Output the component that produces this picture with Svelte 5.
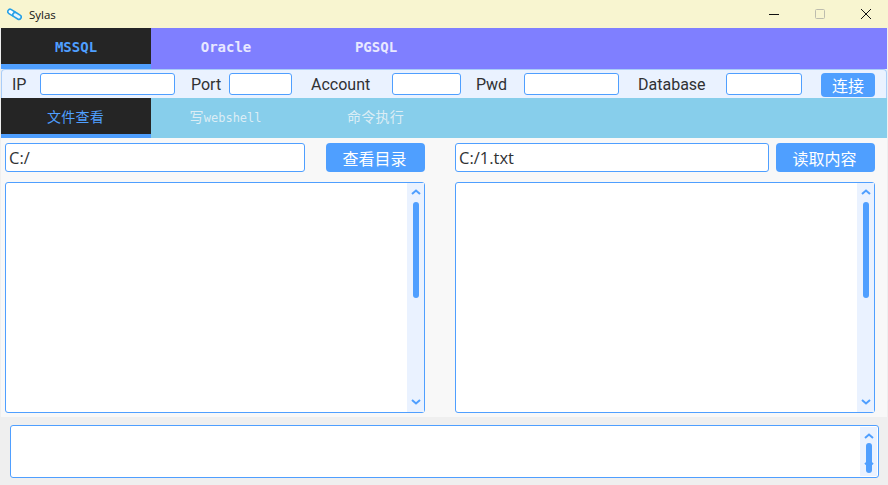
<script>
  const dbTabs = ['MSSQL', 'Oracle', 'PGSQL'];
  const toolTabs = [
    { zh: '文件查看', en: '' },
    { zh: '写', en: 'webshell' },
    { zh: '命令执行', en: '' },
  ];
  let dbTab = $state(0);
  let toolTab = $state(0);
</script>

{#snippet up()}
  <svg class="arrow" width="10" height="6" viewBox="0 0 10 6"><path d="M1 5L5 1.5L9 5" fill="none" stroke="#4f9fff" stroke-width="2"/></svg>
{/snippet}
{#snippet down()}
  <svg class="arrow down" width="10" height="6" viewBox="0 0 10 6"><path d="M1 1L5 4.5L9 1" fill="none" stroke="#4f9fff" stroke-width="2"/></svg>
{/snippet}

<div class="window">
  <header class="titlebar">
    <svg class="logo" width="15" height="13" viewBox="0 0 15 13" fill="none">
      <rect x="0.5" y="2.5" width="9" height="4.6" rx="2.3" transform="rotate(32 5 4.8)" fill="#fff" stroke="#27a0e6" stroke-width="1.6"/>
      <rect x="5.5" y="5.6" width="9" height="4.6" rx="2.3" transform="rotate(32 10 7.9)" fill="#e6f5fd" stroke="#27a0e6" stroke-width="1.6"/>
    </svg>
    <span class="title">Sylas</span>
    <div class="controls">
      <svg width="14" height="14" viewBox="0 0 14 14"><path d="M2 7.5H12" stroke="#111" stroke-width="1"/></svg>
      <svg width="14" height="14" viewBox="0 0 14 14"><rect x="2.5" y="2.5" width="9" height="9" rx="1" fill="none" stroke="#bdbcae"/></svg>
      <svg width="14" height="14" viewBox="0 0 14 14"><path d="M2 2L12 12M12 2L2 12" stroke="#111" stroke-width="1"/></svg>
    </div>
  </header>

  <nav class="tabs db">
    {#each dbTabs as tab, i}
      <button class="tab" class:active={dbTab === i} onclick={() => (dbTab = i)}>{tab}</button>
    {/each}
  </nav>

  <div class="conn">
    <label><span class="l-ip">IP</span><input class="w135" /></label>
    <label><span class="l-port">Port</span><input class="w63" /></label>
    <label><span class="l-account">Account</span><input class="w69" /></label>
    <label><span class="l-pwd">Pwd</span><input class="w95" /></label>
    <label><span class="l-database">Database</span><input class="w76" /></label>
    <button class="btn connect">连接</button>
  </div>

  <nav class="tabs tools">
    {#each toolTabs as tab, i}
      <button class="tab" class:active={toolTab === i} onclick={() => (toolTab = i)}>{tab.zh}<span class="en">{tab.en}</span></button>
    {/each}
  </nav>

  <main class="panes">
    <section class="pane left">
      <div class="bar">
        <input class="path" value="C:/" />
        <button class="btn">查看目录</button>
      </div>
      <div class="box">
        <div class="scroll">
          {@render up()}
          <div class="thumb"></div>
          {@render down()}
        </div>
      </div>
    </section>
    <section class="pane right">
      <div class="bar">
        <input class="path" value="C:/1.txt" />
        <button class="btn">读取内容</button>
      </div>
      <div class="box">
        <div class="scroll">
          {@render up()}
          <div class="thumb"></div>
          {@render down()}
        </div>
      </div>
    </section>
  </main>

  <footer class="log">
    <div class="box small">
      <div class="scroll">
        {@render up()}
        <div class="thumb"></div>
        {@render down()}
      </div>
    </div>
  </footer>
</div>

<style>
  :global(body) {
    background: #efefef;
  }
  .window {
    width: 888px;
    height: 485px;
    overflow: hidden;
    display: flex;
    flex-direction: column;
    font-family: "Open Sans", "Noto Sans CJK SC", sans-serif;
    color: #303133;
    background: #efefef;
    box-sizing: border-box;
    padding-right: 1px;
  }
  .titlebar {
    height: 28px;
    flex-shrink: 0;
    display: flex;
    align-items: center;
    background: #f8f5d0;
    margin-right: -1px;
    padding-left: 7px;
  }
  .logo {
    margin-right: 7px;
  }
  .title {
    font-size: 11.5px;
    color: #111;
  }
  .controls {
    margin-left: auto;
    display: flex;
    gap: 32px;
    padding-right: 15px;
  }
  .tabs {
    display: flex;
    margin-left: 1px;
    flex-shrink: 0;
  }
  .db {
    height: 41px;
    background: #7f7fff;
  }
  .tools {
    height: 40px;
    background: #87ceeb;
  }
  .tab {
    width: 150px;
    border: none;
    padding: 0;
    background: none;
    color: #e8e8ff;
    font-family: "DejaVu Sans Mono", "Noto Sans CJK SC", monospace;
    font-size: 14px;
    cursor: pointer;
  }
  .db .tab {
    font-weight: 700;
    padding: 2px 0 0;
    height: 41px;
    border-bottom: 5px solid transparent;
  }
  .db .tab.active {
    border-bottom-color: #4f9fff;
  }
  .tools .tab {
    color: #dcedf5;
    letter-spacing: 0.3px;
    padding: 0 1px 0 0;
    border-bottom: 4px solid transparent;
  }
  .tools .tab.active {
    border-bottom-color: #4f9fff;
  }
  .tools .en {
    font-size: 12px;
    letter-spacing: 0;
  }
  .tab.active {
    background: #252525;
    color: #4f9fff;
  }
  .conn {
    height: 29px;
    flex-shrink: 0;
    box-sizing: border-box;
    display: flex;
    align-items: flex-start;
    padding: 3px 0 0 10px;
    margin-left: 1px;
    background: #eaf2ff;
    border: 1px solid #a9cdf8;
    border-width: 1px 1px 0 1px;
    border-radius: 4px 4px 0 0;
  }
  .conn label {
    display: flex;
    align-items: center;
    font-family: Roboto, sans-serif;
    font-size: 16px;
    height: 22px;
  }
  .l-ip { width: 28px; }
  .l-port { width: 38px; margin-left: 16px; }
  .l-account { width: 81px; margin-left: 19px; }
  .l-pwd { width: 48px; margin-left: 15px; }
  .l-database { width: 88px; margin-left: 19px; }
  input {
    box-sizing: border-box;
    height: 22px;
    padding: 0 3px;
    border: 1px solid #4f9fff;
    border-radius: 3px;
    background: #fff;
    font-family: inherit;
    color: #303133;
    outline: none;
  }
  .w135 { width: 135px; }
  .w63 { width: 63px; }
  .w69 { width: 69px; }
  .w95 { width: 95px; }
  .w76 { width: 76px; }
  .btn {
    border: none;
    border-radius: 4px;
    background: #4f9fff;
    color: #fff;
    font-family: inherit;
    font-size: 16px;
    padding: 0 2px 0 0;
    cursor: pointer;
  }
  .connect {
    width: 54px;
    height: 24px;
    margin-left: 19px;
    padding: 0;
  }
  .panes {
    height: 279px;
    flex-shrink: 0;
    display: flex;
    gap: 30px;
    box-sizing: border-box;
    padding: 5px 12px 4px 4px;
    background: #f8f8f8;
    margin-left: 1px;
  }
  .pane {
    width: 420px;
    display: flex;
    flex-direction: column;
    gap: 10px;
  }
  .bar {
    display: flex;
    justify-content: space-between;
    height: 29px;
  }
  .path {
    height: 29px;
    font-size: 16.5px;
  }
  .left .path { width: 300px; }
  .right .path { width: 314px; }
  .bar .btn {
    width: 99px;
  }
  .box {
    flex: 1;
    box-sizing: border-box;
    display: flex;
    justify-content: flex-end;
    border: 1px solid #4f9fff;
    border-radius: 3px;
    background: #fff;
  }
  .scroll {
    position: relative;
    width: 17px;
    display: flex;
    flex-direction: column;
    align-items: center;
    background: #eaf2ff;
    padding-top: 6px;
    box-sizing: border-box;
  }
  .arrow {
    flex-shrink: 0;
  }
  .thumb {
    width: 6px;
    height: 96px;
    margin-top: 7px;
    border-radius: 3px;
    background: #4f9fff;
  }
  .arrow.down {
    margin-top: auto;
    margin-bottom: 7px;
  }
  .log {
    flex: 1;
    padding: 8px 8px 7px 10px;
    display: flex;
  }
  .small {
    height: 53px;
    flex: 1;
  }
  .small .scroll {
    height: 49px;
    margin-top: 1px;
    margin-right: 1px;
    padding-top: 6px;
  }
  .small .thumb {
    height: 30px;
    margin-top: 4px;
  }
  /* the bar is too short for its buttons, so the down arrow sits on the thumb */
  .small .arrow.down {
    position: absolute;
    left: 3.5px;
    bottom: 8px;
    margin: 0;
  }
</style>
